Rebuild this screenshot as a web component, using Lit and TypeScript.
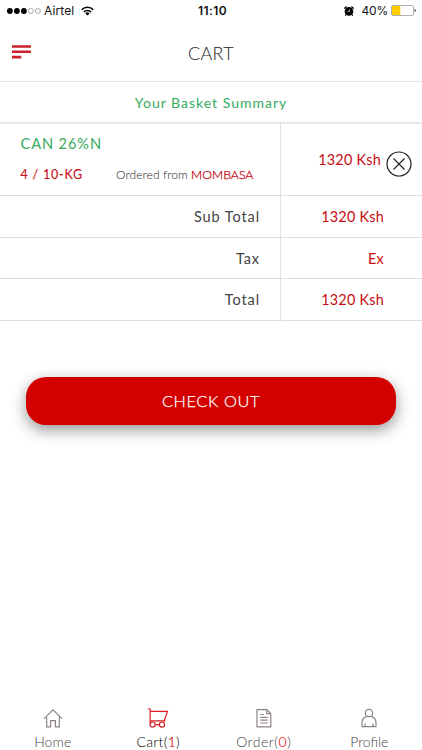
import { LitElement, html, css, svg } from "lit";
import { customElement } from "lit/decorators.js";

@customElement("status-bar")
class StatusBar extends LitElement {
  static styles = css`
    :host { display: grid; grid-template-columns: 1fr auto 1fr; align-items: center; height: 21px; padding: 0 6px 0 7px; box-sizing: border-box; font: 12px/21px Inter, sans-serif; color: #111; }
    .left, .right { display: flex; align-items: center; }
    .right { justify-content: flex-end; }
    .time { font-weight: 600; letter-spacing: 0.4px; padding-left: 2px; }
    .carrier { margin: 0 7px 0 2px; letter-spacing: 0.1px; }
    .pct { margin: 0 3px 0 7px; letter-spacing: -0.2px; }
    svg { display: block; }
  `;
  render() {
    return html`
      <div class="left">
        <svg width="35" height="8" viewBox="0 0 35 8">
          ${[0, 1, 2].map((i) => svg`<circle cx=${2.9 + i * 7} cy="4" r="2.9" fill="#000" />`)}
          ${[3, 4].map((i) => svg`<circle cx=${2.9 + i * 7} cy="4" r="2.5" fill="none" stroke="#777" stroke-width=".6" />`)}
        </svg>
        <span class="carrier">Airtel</span>
        <svg width="13" height="10" viewBox="0 0 13 10" fill="none" stroke="#000" stroke-width="1.6">
          <path d="M.7 3.7a8.2 8.2 0 0 1 11.6 0M2.9 6a5.1 5.1 0 0 1 7.2 0" />
          <path d="M6.5 9.5 4.4 7.4a3 3 0 0 1 4.2 0z" fill="#000" stroke="none" />
        </svg>
      </div>
      <span class="time">11:10</span>
      <div class="right">
        <svg width="10" height="10" viewBox="0 0 10 10">
          <circle cx="5" cy="5.4" r="4.3" />
          <path d="M.3 2.5 2.6.5M9.7 2.5 7.4.5M2 8.5 1.2 9.7M8 8.5l.8 1.2" stroke="#000" stroke-width="1.2" />
          <path d="M5.4 3.4v2.3H3.6" stroke="#fff" stroke-width=".7" fill="none" />
        </svg>
        <span class="pct">40%</span>
        <svg width="25" height="11" viewBox="0 0 25 11">
          <rect x=".5" y=".5" width="22" height="10" rx="1.4" fill="#fff" stroke="#999" stroke-width=".8" />
          <path d="M1 1h8.3v9H1z" fill="#fc0" />
          <path d="M23.6 4c1.6.3 1.6 2.7 0 3z" fill="#333" />
        </svg>
      </div>
    `;
  }
}

@customElement("tab-bar")
class TabBar extends LitElement {
  static styles = css`
    :host { display: grid; grid-template-columns: repeat(4, 1fr); height: 43px; font: 300 14px/17px Lato, sans-serif; color: #444; }
    .tab { display: flex; flex-direction: column; align-items: center; gap: 4px; }
    svg { display: block; fill: none; stroke: #8c8582; stroke-width: 1.2; }
    .label { white-space: nowrap; }
    .active { color: #000; }
    .active svg { stroke: #dc1f28; }
    .count { color: #f02020; -webkit-text-stroke: 0.2px; }
    .active .count { color: #d4000c; }
    .home { letter-spacing: 0.1px; }
    .cart { letter-spacing: 0.3px; }
    .order { letter-spacing: 0.55px; }
    .profile { letter-spacing: 0; }
  `;
  render() {
    return html`
      <div class="tab">
        <svg width="22" height="22" viewBox="0 0 22 22">
          <path d="M2 11.6 11 2.8l9 8.8M4.7 10.3v9.6h3.9v-6.3h4.8v6.3h3.9v-9.6" />
        </svg>
        <span class="label home">Home</span>
      </div>
      <div class="tab active">
        <svg width="22" height="22" viewBox="0 0 22 22">
          <path d="M.9 2h2.3v11.8h15.2M3.2 4.3h17.3l-3.2 9.5" />
          <circle cx="5.6" cy="17.6" r="2.6" /><circle cx="15" cy="17.6" r="2.6" />
          <path d="M8.2 17.6h4.2M3.2 13.8v2.8" />
        </svg>
        <span class="label cart">Cart(<span class="count">1</span>)</span>
      </div>
      <div class="tab">
        <svg width="22" height="22" viewBox="0 0 22 22">
          <path d="M4 2.6h9.8l4 4v13.2H4zM13.8 2.6v4h4" />
          <path d="M7.3 7.5h3.5M7.3 10.4h7.3M7.3 13.2h7.3M7.3 16h7.3" />
        </svg>
        <span class="label order">Order(<span class="count">0</span>)</span>
      </div>
      <div class="tab">
        <svg width="22" height="22" viewBox="0 0 22 22">
          <circle cx="11" cy="6" r="3.7" />
          <path d="M8.5 9.4C5.7 10.6 4 12.8 4 15.8v3.8h14v-3.8c0-3-1.7-5.2-4.5-6.4M7.1 16.4v3.2M14.9 16.4v3.2" />
        </svg>
        <span class="label profile">Profile</span>
      </div>
    `;
  }
}

@customElement("app-root")
class AppRoot extends LitElement {
  static styles = css`
    :host { display: flex; flex-direction: column; height: 750px; background: #fff; font-family: Lato, sans-serif; color: #444; overflow: hidden; }
    .header { display: grid; grid-template-columns: 1fr auto 1fr; align-items: center; height: 60px; padding: 0 12px; border-bottom: 1px solid #e2e2e2; }
    .menu { display: block; margin-top: 1px; }
    .title { margin: 4px 0 0; font-size: 18px; font-weight: 300; line-height: 24px; letter-spacing: 0.3px; color: #222; }
    .summary { height: 40px; border-bottom: 2px solid #e9e9e9; text-align: center; font-size: 14px; line-height: 41px; letter-spacing: 1px; color: #35ab60; }
    .row { display: grid; grid-template-columns: 280px 1fr; height: 41px; border-bottom: 1px solid #dedede; font-size: 14.5px; line-height: 42px; letter-spacing: 0.9px; }
    .row.short { height: 40px; }
    .label { padding-right: 20px; text-align: right; }
    .value { padding-right: 38px; border-left: 1px solid #e2e2e2; text-align: right; color: #c80d12; font-size: 14.4px; letter-spacing: 0.25px; }
    .row.product { height: 71px; }
    .info { padding: 10px 0 0 20.5px; }
    .name { font-size: 14.6px; line-height: 20px; letter-spacing: 0.9px; color: #35ab60; }
    .meta { display: flex; align-items: baseline; margin-top: 12px; line-height: 18px; }
    .qty { width: 95.5px; font-size: 12.5px; letter-spacing: 0.8px; color: #c80d12; -webkit-text-stroke: 0.1px; }
    .origin { font-size: 12px; font-weight: 300; letter-spacing: 0.1px; white-space: nowrap; color: #222; }
    .place { color: #c4000a; font-size: 12.3px; letter-spacing: 0; -webkit-text-stroke: 0.25px; }
    .price { display: flex; justify-content: flex-end; padding-right: 10px; }
    .amount { line-height: 72px; }
    .remove { display: block; margin: 27px 0 0 5px; fill: none; stroke: #222; stroke-width: 1.2; }
    .checkout { margin: 56px 26px 0; height: 48px; border: 0; border-radius: 20px; background: #d40000; color: #fff; font: 300 16.3px/48px Lato, sans-serif; letter-spacing: 0.65px; -webkit-text-stroke: 0.25px; box-shadow: 0 5px 15px rgba(0, 0, 0, 0.42); padding: 0; }
    .nav { margin-top: auto; }
  `;
  render() {
    return html`
      <status-bar></status-bar>
      <header class="header">
        <svg class="menu" width="19" height="14" viewBox="0 0 19 14" stroke="#cb2229" stroke-width="2.6">
          <path d="M0 1.5h19M0 6.8h19M0 12.1h9.3" />
        </svg>
        <h1 class="title">CART</h1>
      </header>
      <div class="summary">Your Basket Summary</div>
      <div class="row product">
        <div class="info">
          <div class="name">CAN 26%N</div>
          <div class="meta">
            <span class="qty">4 / 10-KG</span>
            <span class="origin">Ordered from <span class="place">MOMBASA</span></span>
          </div>
        </div>
        <div class="value price">
          <span class="amount">1320 Ksh</span>
          <svg class="remove" width="26" height="26" viewBox="0 0 26 26">
            <circle cx="13" cy="13" r="12" /><path d="m7.5 7.5 11 11M18.5 7.5l-11 11" />
          </svg>
        </div>
      </div>
      <div class="row"><span class="label">Sub Total</span><span class="value">1320 Ksh</span></div>
      <div class="row short"><span class="label">Tax</span><span class="value">Ex</span></div>
      <div class="row"><span class="label">Total</span><span class="value">1320 Ksh</span></div>
      <button class="checkout">CHECK OUT</button>
      <tab-bar class="nav"></tab-bar>
    `;
  }
}
